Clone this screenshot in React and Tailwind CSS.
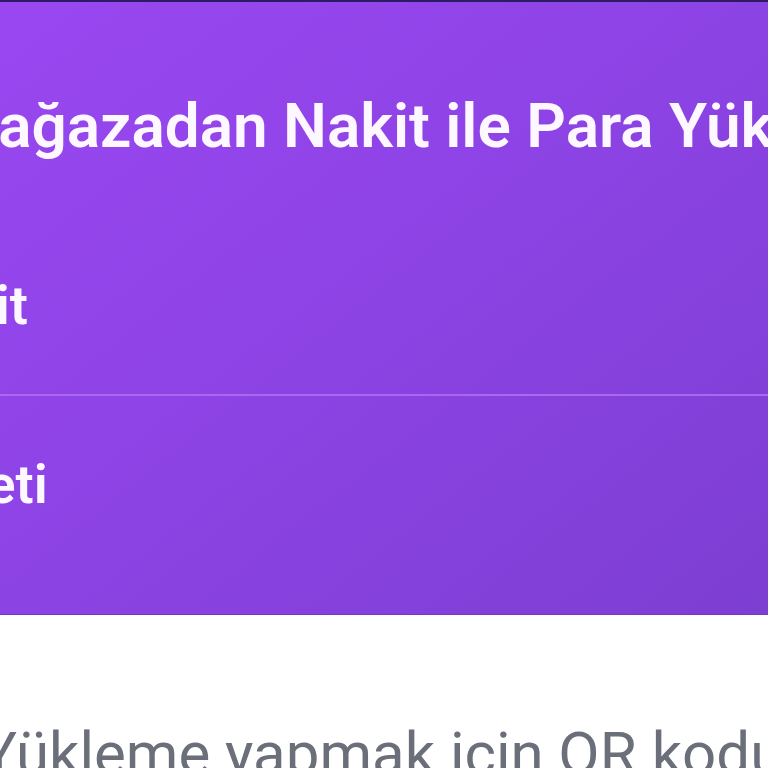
export default function App() {
  return (
    <div
      className="w-[768px] h-[768px] overflow-hidden bg-white flex flex-col"
      style={{ fontFamily: "Roboto, 'Noto Sans', sans-serif" }}
    >
      <div className="h-[615px] shrink-0 flex flex-col border-t-2 border-t-[#2e1b68] border-b border-b-[#7438c8] bg-gradient-to-br from-[#9a47f1] via-[#8c43e4] to-[#7d3ed2]">
        <h1 className="mt-[88px] ml-[-56px] whitespace-nowrap text-[62px] leading-[72px] font-semibold text-[#fdf7ff]">
          Mağazadan Nakit ile Para Yükleme
        </h1>
        <div className="mt-[56px] flex flex-col">
          <div className="py-[56px] border-b-2 border-[#a868f2]">
            <div className="ml-[-100px] whitespace-nowrap text-[54px] leading-[64px] font-semibold text-[#fdf7ff]">
              Nakit
            </div>
          </div>
          <div className="pt-[57px]">
            <div className="ml-[-96px] whitespace-nowrap text-[54px] leading-[64px] font-semibold text-[#fdf7ff]">
              Ücreti
            </div>
          </div>
        </div>
      </div>
      <div className="pt-[104px]">
        <p className="ml-[-19px] whitespace-nowrap text-[60px] leading-[70px] text-[#6b6f7a]">
          Yükleme yapmak için QR kodunu okutun
        </p>
      </div>
    </div>
  );
}
